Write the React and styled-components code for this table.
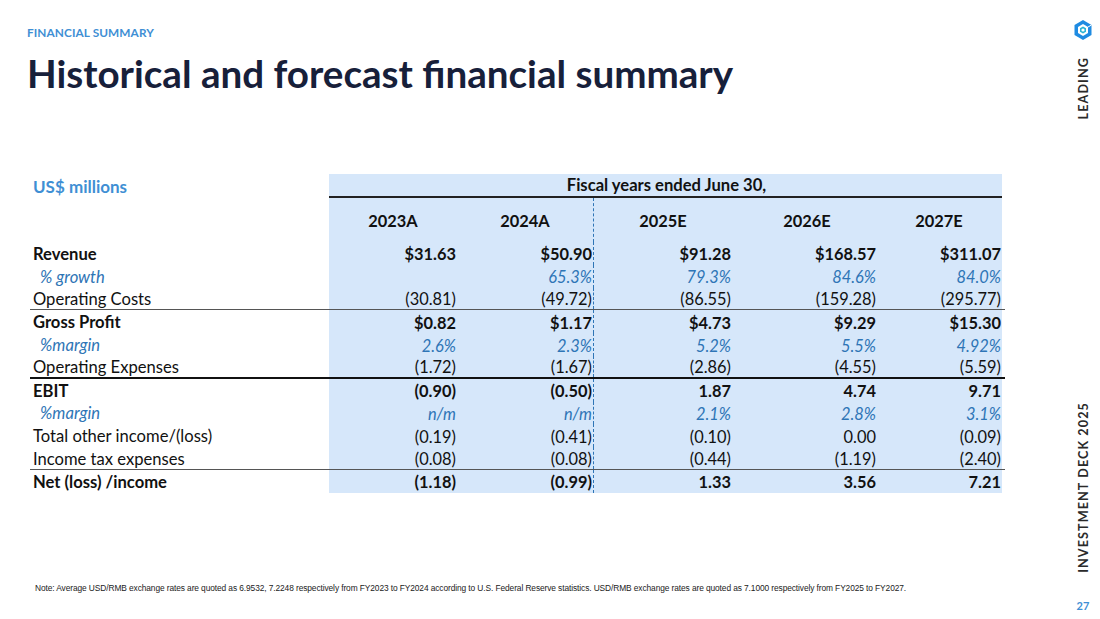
import React from "react"
import styled, { createGlobalStyle } from "styled-components"

const GlobalStyle = createGlobalStyle`
  html, body {
    margin: 0;
    padding: 0;
    background: #ffffff;
  }
  body {
    font-family: "Lato", "Liberation Sans", sans-serif;
    color: #111;
  }
`

const Page = styled.div`
  width: 1100px;
  height: 619px;
  display: flex;
  overflow: hidden;
  background: #fff;
`

const Main = styled.div`
  flex: 1;
  display: flex;
  flex-direction: column;
  padding: 26px 0 26px 27px;
`

const Kicker = styled.div`
  font-size: 11.8px;
  line-height: 14px;
  font-weight: 700;
  color: #3f8fd4;
  letter-spacing: 0.1px;
`

const Title = styled.h1`
  margin: 11px 0 0 0;
  font-size: 38.6px;
  line-height: 45px;
  font-weight: 700;
  color: #17203a;
`

const Table = styled.div`
  margin-top: 78px;
  display: flex;
  flex-direction: column;
  width: 975px;
  margin-left: 3px;
`

const Row = styled.div`
  display: grid;
  grid-template-columns: 299px 134px 131px 144px 144px 120px;
  height: ${p => p.$h || 22.8}px;
  box-sizing: border-box;
  border-bottom: ${p => p.$line || "none"};
`

const Label = styled.div`
  display: flex;
  align-items: center;
  padding-left: ${p => p.$indent ? 10 : 3}px;
  padding-top: 1px;
  font-size: 16.6px;
  font-weight: ${p => p.$bold ? 700 : 400};
  font-style: ${p => p.$italic ? "italic" : "normal"};
  color: ${p => p.$blue ? "#2e75b6" : "#111"};
  white-space: nowrap;
`

const Units = styled(Label)`
  font-size: 17px;
  color: #3f8fd4;
  font-weight: 700;
`

const Cell = styled.div`
  display: flex;
  align-items: center;
  justify-content: ${p => p.$center ? "center" : "flex-end"};
  padding-right: ${p => p.$pad ?? 7}px;
  padding-top: 1px;
  background: #d6e7fa;
  font-size: 16.4px;
  font-weight: ${p => p.$bold ? 700 : 400};
  font-style: ${p => p.$italic ? "italic" : "normal"};
  color: ${p => p.$blue ? "#2e75b6" : "#111"};
  border-right: ${p => p.$dash ? "1px dashed #2e75b6" : "none"};
  white-space: nowrap;
`

const HeaderBand = styled.div`
  grid-column: 2 / 7;
  display: flex;
  align-items: center;
  justify-content: center;
  background: #d6e7fa;
  border-bottom: 2px solid #222;
  font-size: 16.6px;
  font-weight: 700;
  padding-left: 2px;
`

const Note = styled.div`
  margin-top: auto;
  padding-left: 8px;
  font-size: 8.4px;
  line-height: 10px;
  color: #222;
  font-family: "Liberation Sans", sans-serif;
  letter-spacing: -0.1px;
`

const Side = styled.div`
  width: 32px;
  display: flex;
  flex-direction: column;
  align-items: center;
  padding: 19px 0 7px 0;
  margin-right: 1px;
`

const Vertical = styled.div`
  writing-mode: vertical-rl;
  transform: rotate(180deg);
  font-size: 12.6px;
  font-weight: 700;
  letter-spacing: 1.1px;
  color: #2a2a2a;
  white-space: nowrap;
  margin-top: ${p => p.$top || 0}px;
`

const Spacer = styled.div`
  flex: 1;
`

const PageNum = styled.div`
  margin-top: 26px;
  font-size: 11px;
  font-weight: 700;
  color: #3f8fd4;
`

const Logo = () => (
  <svg width="20" height="22" viewBox="0 0 20 22">
    <path d="M10 1 L18.5 6 L18.5 16 L10 21 L1.5 16 L1.5 6 Z" fill="#1f8be2" />
    <path d="M10 5 L15 8 L15 14 L10 17 L5 14 L5 8 Z" fill="#ffffff" />
    <path d="M10 7.5 L13 9.2 L13 12.8 L10 14.5 L7 12.8 L7 9.2 Z" fill="#2bb3d4" />
    <circle cx="10" cy="11" r="1.6" fill="#ffffff" />
    <path d="M15 8 L18.5 6" stroke="#ffffff" strokeWidth="1" />
  </svg>
)

const cols = ["2023A", "2024A", "2025E", "2026E", "2027E"]
const pads = [7, 1, 7, 6, 1]

const rows = [
  { label: "Revenue", bold: true, values: ["$31.63", "$50.90", "$91.28", "$168.57", "$311.07"] },
  { label: "% growth", italic: true, blue: true, indent: true, values: ["", "65.3%", "79.3%", "84.6%", "84.0%"] },
  { label: "Operating Costs", values: ["(30.81)", "(49.72)", "(86.55)", "(159.28)", "(295.77)"], line: "1px solid #555" },
  { label: "Gross Profit", bold: true, values: ["$0.82", "$1.17", "$4.73", "$9.29", "$15.30"] },
  { label: "%margin", italic: true, blue: true, indent: true, values: ["2.6%", "2.3%", "5.2%", "5.5%", "4.92%"] },
  { label: "Operating Expenses", values: ["(1.72)", "(1.67)", "(2.86)", "(4.55)", "(5.59)"], line: "2px solid #111" },
  { label: "EBIT", bold: true, values: ["(0.90)", "(0.50)", "1.87", "4.74", "9.71"] },
  { label: "%margin", italic: true, blue: true, indent: true, values: ["n/m", "n/m", "2.1%", "2.8%", "3.1%"] },
  { label: "Total other income/(loss)", values: ["(0.19)", "(0.41)", "(0.10)", "0.00", "(0.09)"] },
  { label: "Income tax expenses", values: ["(0.08)", "(0.08)", "(0.44)", "(1.19)", "(2.40)"], line: "1px solid #555" },
  { label: "Net (loss) /income", bold: true, values: ["(1.18)", "(0.99)", "1.33", "3.56", "7.21"] },
]

export default function App() {
  return (
    <Page>
      <GlobalStyle />
      <Main>
        <Kicker>FINANCIAL SUMMARY</Kicker>
        <Title>Historical and forecast financial summary</Title>

        <Table>
          <Row $h={24}>
            <Units>US$ millions</Units>
            <HeaderBand>Fiscal years ended June 30,</HeaderBand>
          </Row>
          <Row $h={44}>
            <Label />
            {cols.map((c, i) => (
              <Cell key={c} $center $bold $pad={6} $dash={i === 1}>{c}</Cell>
            ))}
          </Row>
          {rows.map((r, ri) => (
            <Row key={ri} $line={r.line}>
              <Label $bold={r.bold} $italic={r.italic} $blue={r.blue} $indent={r.indent}>{r.label}</Label>
              {r.values.map((v, i) => (
                <Cell
                  key={i}
                  $bold={r.bold}
                  $italic={r.italic}
                  $blue={r.blue}
                  $dash={i === 1}
                  $pad={pads[i]}
                >
                  {v}
                </Cell>
              ))}
            </Row>
          ))}
        </Table>

        <Note>
          Note: Average USD/RMB exchange rates are quoted as 6.9532, 7.2248 respectively from FY2023 to FY2024 according to U.S. Federal Reserve statistics. USD/RMB exchange rates are quoted as 7.1000 respectively from FY2025 to FY2027.
        </Note>
      </Main>

      <Side>
        <Logo />
        <Vertical $top={16}>LEADING</Vertical>
        <Spacer />
        <Vertical>INVESTMENT DECK 2025</Vertical>
        <PageNum>27</PageNum>
      </Side>
    </Page>
  )
}
